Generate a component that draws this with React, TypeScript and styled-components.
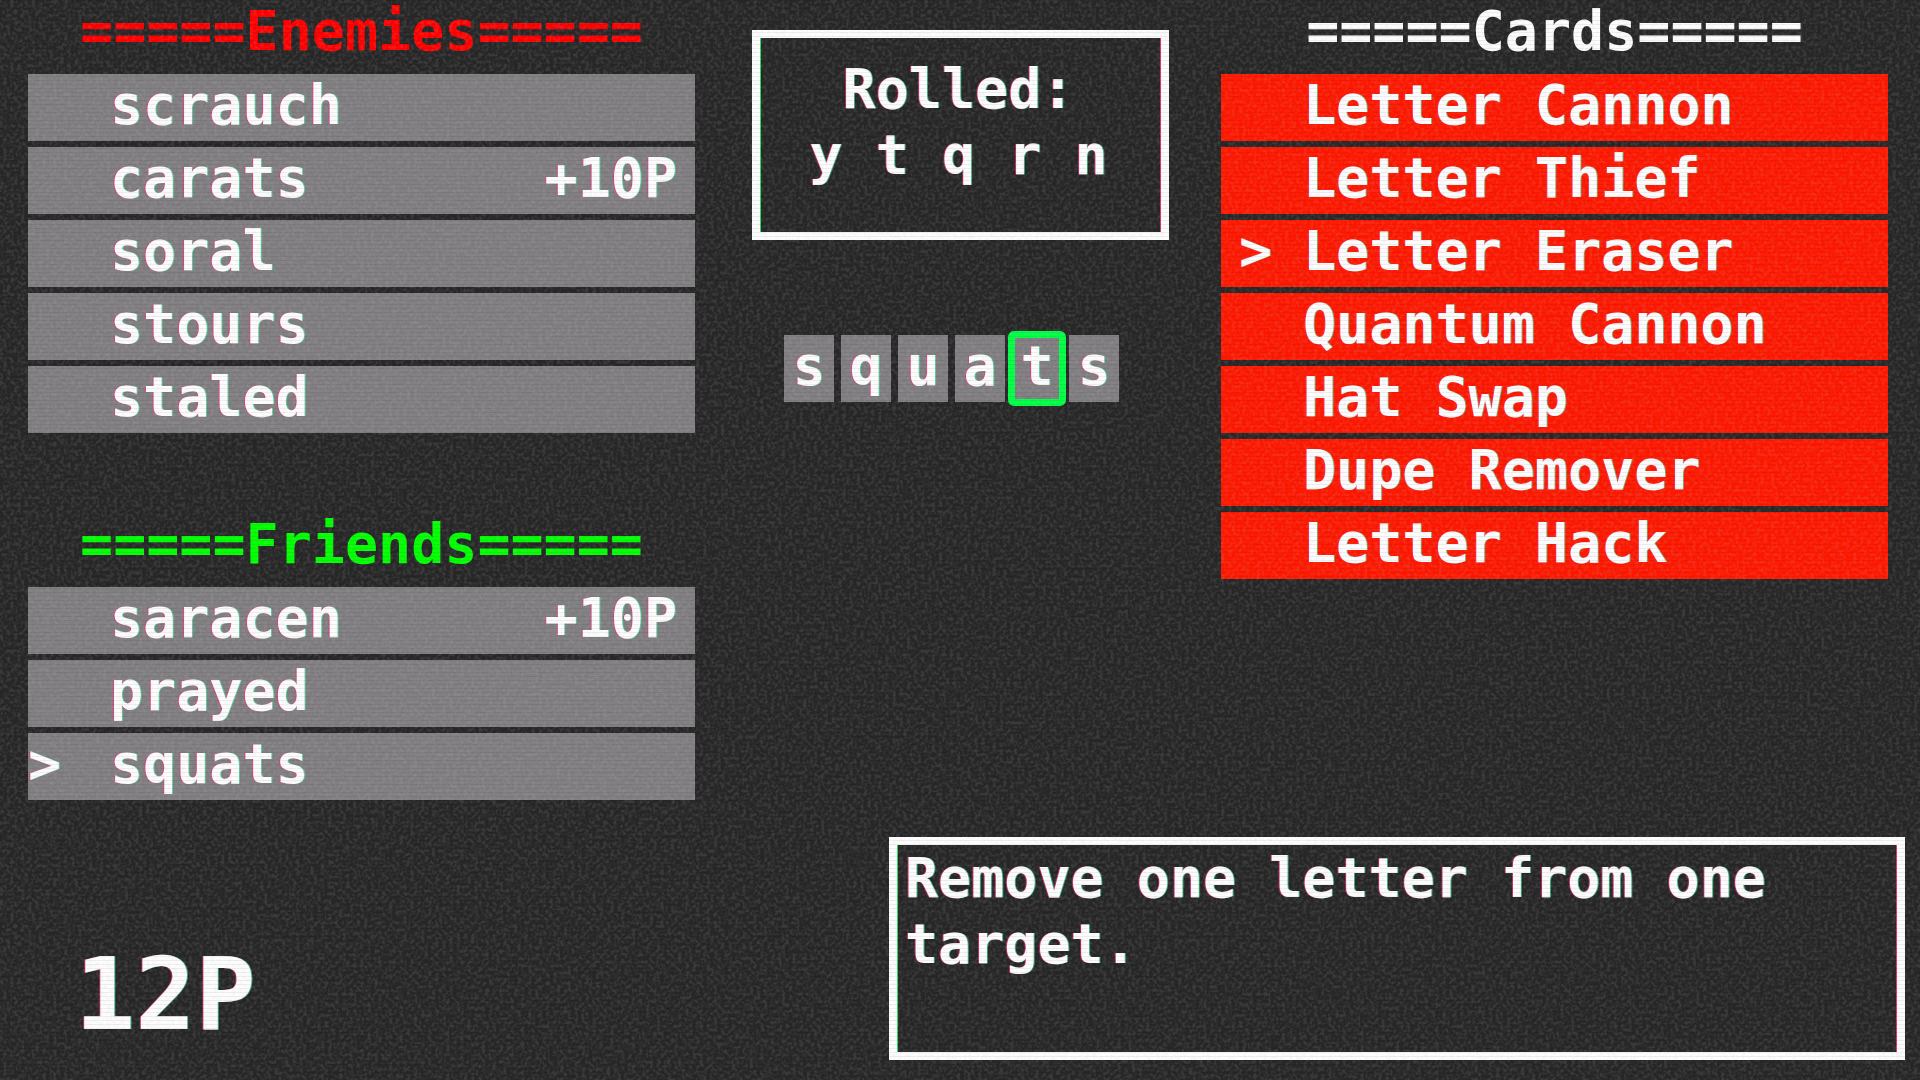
import React from "react";
import styled, { createGlobalStyle, css } from "styled-components";

const ink = "#fdfdfd";
const fringe = css`
  text-shadow: -1px 0 rgba(255, 40, 130, 0.7), 1px 0 rgba(60, 255, 170, 0.6);
`;

const GlobalStyle = createGlobalStyle`
  *, *::before, *::after { box-sizing: border-box; }
  body {
    margin: 0;
    background: #272727;
    color: ${ink};
    font-family: "DejaVu Sans Mono", "Liberation Mono", monospace;
    font-weight: 700;
    font-size: 55px;
    line-height: 62px;
  }
`;

const Screen = styled.div`
  min-height: 100vh;
  display: flex;
  flex-direction: column;
  justify-content: space-between;
  padding-bottom: 20px;
`;

const Board = styled.main`
  display: grid;
  grid-template-columns: 667fr 526fr 667fr;
  padding: 0 32px 0 28px;
`;

const Column = styled.div`
  display: flex;
  flex-direction: column;
  gap: 80px;
  min-width: 0;
`;

const Group = styled.section`
  display: flex;
  flex-direction: column;
  gap: 12px;
`;

const Heading = styled.h2<{ $tone: string }>`
  margin: 0;
  font-size: 55px;
  line-height: 62px;
  text-align: center;
  white-space: nowrap;
  color: ${(p) => p.$tone};
`;

const List = styled.ul`
  list-style: none;
  margin: 0;
  padding: 0;
  display: flex;
  flex-direction: column;
  gap: 6px;
`;

const Row = styled.button<{ $card?: boolean }>`
  display: grid;
  grid-template-columns: ${(p) => (p.$card ? "64px" : "82px")} 1fr auto;
  width: 100%;
  height: 67px;
  padding: 0 18px 5px ${(p) => (p.$card ? "18px" : "0")};
  border: 0;
  background: ${(p) => (p.$card ? "#ff1800" : "#807e80")};
  color: inherit;
  font: inherit;
  text-align: left;
  white-space: nowrap;
  cursor: pointer;
  ${fringe}
`;

const Middle = styled.div`
  display: flex;
  flex-direction: column;
  gap: 95px;
  padding: 30px 52px 0 57px;
`;

const Frame = styled.section`
  border: 8px solid ${ink};
  line-height: 66px;
  box-shadow: inset 1px 0 #20e060, inset -1px 0 #e0306a;
  ${fringe}
`;

const RolledBox = styled(Frame)`
  padding: 18px 4px 44px 0;
  text-align: center;
  white-space: nowrap;
`;

const Line = styled.p`
  margin: 0;
`;

const Tiles = styled.div`
  display: flex;
  gap: 7px;
  padding-left: 32px;
`;

const Tile = styled.button<{ $active: boolean }>`
  width: 50px;
  height: 67px;
  padding: 0 0 5px;
  border: 0;
  background: #807e80;
  color: inherit;
  font: inherit;
  cursor: pointer;
  ${fringe}
  ${(p) =>
    p.$active &&
    css`
      border-radius: 2px;
      outline: 7px solid #00ff45;
      outline-offset: -3px;
    `}
`;

const Footer = styled.footer`
  display: grid;
  grid-template-columns: 7fr 8fr;
  align-items: end;
  padding-right: 15px;
`;

const Score = styled.strong`
  padding: 0 0 15px 75px;
  font-size: 100px;
  line-height: 100px;
  ${fringe}
`;

const Description = styled(Frame)`
  min-height: 223px;
  padding: 0 8px;
  line-height: 66px;
`;

const Grain = styled.svg`
  position: fixed;
  inset: 0;
  width: 100%;
  height: 100%;
  pointer-events: none;
  opacity: 0.12;
`;

const Scanlines = styled.div`
  position: fixed;
  inset: 0;
  pointer-events: none;
  background: repeating-linear-gradient(
    to bottom,
    rgba(0, 0, 0, 0.06) 0 1px,
    transparent 1px 4px
  );
`;

type Entry = { name: string; bonus?: string; selected?: boolean };

const enemies: Entry[] = [
  { name: "scrauch" },
  { name: "carats", bonus: "+10P" },
  { name: "soral" },
  { name: "stours" },
  { name: "staled" },
];

const friends: Entry[] = [
  { name: "saracen", bonus: "+10P" },
  { name: "prayed" },
  { name: "squats", selected: true },
];

const cards: Entry[] = [
  { name: "Letter Cannon" },
  { name: "Letter Thief" },
  { name: "Letter Eraser", selected: true },
  { name: "Quantum Cannon" },
  { name: "Hat Swap" },
  { name: "Dupe Remover" },
  { name: "Letter Hack" },
];

function EntryGroup(props: { title: string; tone: string; entries: Entry[]; card?: boolean }) {
  return (
    <Group>
      <Heading $tone={props.tone}>{`=====${props.title}=====`}</Heading>
      <List>
        {props.entries.map((entry) => (
          <li key={entry.name}>
            <Row type="button" $card={props.card} aria-pressed={!!entry.selected}>
              <span>{entry.selected ? ">" : ""}</span>
              <span>{entry.name}</span>
              {entry.bonus && <span>{entry.bonus}</span>}
            </Row>
          </li>
        ))}
      </List>
    </Group>
  );
}

export default function App() {
  const [target, setTarget] = React.useState(4);
  return (
    <Screen>
      <GlobalStyle />
      <Board>
        <Column>
          <EntryGroup title="Enemies" tone="#ff0000" entries={enemies} />
          <EntryGroup title="Friends" tone="#00ff00" entries={friends} />
        </Column>
        <Middle>
          <RolledBox>
            <Line>Rolled:</Line>
            <Line>y t q r n</Line>
          </RolledBox>
          <Tiles>
            {"squats".split("").map((letter, i) => (
              <Tile key={i} type="button" $active={i === target} onClick={() => setTarget(i)}>
                {letter}
              </Tile>
            ))}
          </Tiles>
        </Middle>
        <Column>
          <EntryGroup title="Cards" tone={ink} entries={cards} card />
        </Column>
      </Board>
      <Footer>
        <Score>12P</Score>
        <Description>
          <Line>Remove one letter from one target.</Line>
        </Description>
      </Footer>
      <Grain aria-hidden="true">
        <filter id="grain" x="0" y="0" width="100%" height="100%">
          <feTurbulence type="fractalNoise" baseFrequency="0.28" numOctaves="2" seed="4" />
          <feColorMatrix
            type="matrix"
            values="0 0 0 0 0.6  0 0 0 0 0.6  0 0 0 0 0.6  3.4 0 0 0 -1.4"
          />
        </filter>
        <rect width="100%" height="100%" filter="url(#grain)" />
      </Grain>
      <Scanlines />
    </Screen>
  );
}
